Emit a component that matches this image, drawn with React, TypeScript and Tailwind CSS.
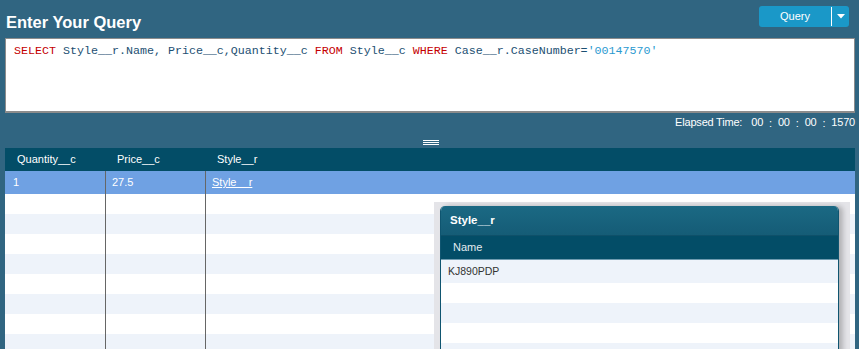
import React from 'react';

const kw = 'text-[#c40000]';
const id = 'text-[#1c4f72]';
const str = 'text-[#2a9ad0]';

const Code: React.FC = () => (
    <div className="font-['Liberation_Mono','Courier_New',monospace] text-[11.67px] leading-[14px] whitespace-pre">
        <span className={kw}>SELECT</span>
        <span className={id}> Style__r.Name, Price__c,Quantity__c </span>
        <span className={kw}>FROM</span>
        <span className={id}> Style__c </span>
        <span className={kw}>WHERE</span>
        <span className={id}> Case__r.CaseNumber=</span>
        <span className={str}>'00147570'</span>
    </div>
);

const rows = Array.from({ length: 8 });

export default function App() {
    return (
        <div className="relative w-[859px] h-[349px] overflow-hidden bg-[#306581] font-['Liberation_Sans',Arial,sans-serif]">
            <div className="flex items-start justify-between h-[38px] pl-[6px] pr-[10px] pt-[6px]">
                <h1 className="text-[16.5px] font-bold text-white leading-[20px] mt-[6px]">Enter Your Query</h1>
                <div className="flex h-[21px] w-[90px] rounded-[3px] bg-[#1a98c8] text-white text-[11px]">
                    <button className="flex-1 flex items-center justify-center">Query</button>
                    <div className="w-px bg-white my-[1px]" />
                    <div className="w-[17px] flex items-center justify-center">
                        <svg width="8" height="5" viewBox="0 0 8 5">
                            <path d="M0 0 L8 0 L4 4.5 Z" fill="white" />
                        </svg>
                    </div>
                </div>
            </div>

            <div className="ml-[5px] mr-[4px] h-[75px] bg-white border border-[#8c8c8c] border-b-2 pl-[8px] pt-[5px]">
                <Code />
            </div>

            <div className="h-[18px] flex items-center justify-end pr-[4px] text-[11px] text-white tracking-[-0.2px]">
                <span>Elapsed Time:</span>
                <span className="ml-[9px]">00</span>
                <span className="mx-[6px] mt-[3px]">:</span>
                <span>00</span>
                <span className="mx-[6px] mt-[3px]">:</span>
                <span>00</span>
                <span className="mx-[6px] mt-[3px]">:</span>
                <span>1570</span>
            </div>

            <div className="h-[17px] flex justify-center pt-[9px] pl-[3px]">
                <div className="w-[16px] flex flex-col gap-px">
                    <div className="h-px bg-white" />
                    <div className="h-px bg-white" />
                    <div className="h-px bg-white" />
                </div>
            </div>

            <div className="ml-[5px] w-[850px] text-[11px]">
                <div className="flex h-[23px] items-center bg-[#034d67] text-white">
                    <div className="w-[101px] pl-[12px]">Quantity__c</div>
                    <div className="w-[100px] pl-[11px]">Price__c</div>
                    <div className="flex-1 pl-[11px]">Style__r</div>
                </div>
                <div className="flex h-[23px] bg-[#6fa1e3] text-white">
                    <div className="w-[101px] border-r border-[#666] pl-[8px] flex items-center">1</div>
                    <div className="w-[100px] border-r border-[#666] pl-[6px] flex items-center">27.5</div>
                    <div className="flex-1 pl-[6px] flex items-center">
                        <span className="underline">Style__r</span>
                    </div>
                </div>
                {rows.map((_, i) => (
                    <div key={i} className={`flex h-[20px] ${i % 2 === 0 ? 'bg-white' : 'bg-[#eef3fa]'}`}>
                        <div className="w-[101px] border-r border-[#666]" />
                        <div className="w-[100px] border-r border-[#666]" />
                        <div className="flex-1" />
                    </div>
                ))}
            </div>

            {/* lookup window */}
            <div className="absolute left-[434px] top-[202px] w-[416px] h-[160px] bg-[#e4e4e8]">
                <div className="absolute left-[6px] top-[4px] w-[399px] h-[160px] rounded-t-[5px] bg-white border-x border-[#0f5570] shadow-[4px_0_5px_rgba(0,0,0,0.22)] overflow-hidden text-[11px]">
                    <div className="h-[30px] flex items-center pl-[9px] bg-gradient-to-b from-[#1b6984] to-[#155c76] text-white font-bold text-[11.5px] border-b border-[#0f5069]">
                        Style__r
                    </div>
                    <div className="h-[24px] flex items-center pl-[12px] bg-[#034d67] text-[#e4ecf0] border-b border-[#6e9bb0]">
                        Name
                    </div>
                    <div className="h-[23px] flex items-center pl-[7px] bg-[#eef3fa] text-[#333] text-[10.5px]">KJ890PDP</div>
                    {rows.slice(0, 4).map((_, i) => (
                        <div key={i} className={`h-[20px] ${i % 2 === 0 ? 'bg-white' : 'bg-[#eef3fa]'}`} />
                    ))}
                </div>
            </div>
        </div>
    );
}
